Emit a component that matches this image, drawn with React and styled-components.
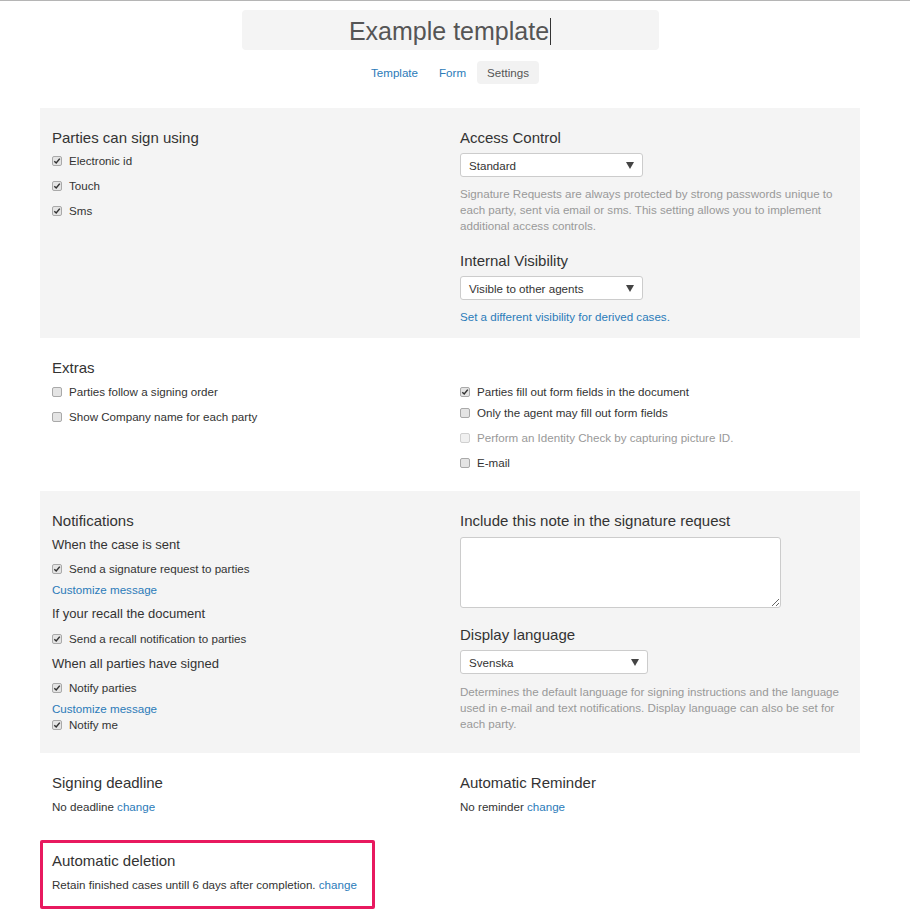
import React from 'react';
import styled, { createGlobalStyle } from 'styled-components';

const SMALL = '11.6px';

const GlobalStyle = createGlobalStyle`
  body {
    margin: 0;
    border-top: 1px solid #b5b5b5;
    font-family: "Liberation Sans", Arial, sans-serif;
    color: #333;
    background: #fff;
  }
`

const Page = styled.div`
  width: 820px;
  margin: 0 50px 0 40px;
  padding-bottom: 4px;
`
const TitleBox = styled.div`
  width: 417px;
  height: 40px;
  margin: 9px auto 0;
  padding-top: 2px;
  box-sizing: border-box;
  background: #f4f4f4;
  border-radius: 4px;
  display: flex;
  align-items: center;
  justify-content: center;
  font-size: 25px;
  color: #555;
`
const Caret = styled.span`
  display: inline-block;
  width: 1px;
  height: 27px;
  margin-left: 1px;
  background: #333;
`
const Tabs = styled.div`
  display: flex;
  justify-content: center;
  gap: 1px;
  margin-top: 11px;
`
const Tab = styled.a`
  height: 23px;
  line-height: 24px;
  padding: 0 10px;
  font-size: ${SMALL};
  border-radius: 4px;
  color: ${p => (p.$active ? '#555' : '#2b7bb9')};
  background: ${p => (p.$active ? '#f2f2f2' : 'transparent')};
`
const Panel = styled.section`
  display: grid;
  grid-template-columns: 388px 388px;
  column-gap: 20px;
  align-items: start;
  margin-top: ${p => p.$mt || 0}px;
  padding: ${p => p.$pt}px 12px ${p => p.$pb}px;
  background: ${p => (p.$gray ? '#f4f4f4' : 'transparent')};
`
const Col = styled.div`
  display: flex;
  flex-direction: column;
  align-items: flex-start;
`
const Heading = styled.h4`
  margin: ${p => p.$mt || 0}px 0 0;
  font-size: 15px;
  line-height: 20px;
  font-weight: normal;
  color: #333;
`
const SubHeading = styled.div`
  margin-top: ${p => p.$mt || 0}px;
  font-size: 13px;
  line-height: 18px;
`
const Row = styled.label`
  display: flex;
  align-items: center;
  gap: 7px;
  height: 21px;
  margin-top: ${p => p.$mt || 0}px;
  font-size: ${SMALL};
  color: ${p => (p.$disabled ? '#999' : '#333')};
`
const Box = styled.span`
  width: 10px;
  height: 10px;
  box-sizing: border-box;
  border: 1px solid ${p => (p.$disabled ? '#d0d0d0' : '#a9a9a9')};
  border-radius: 2px;
  background: ${p => (p.$disabled ? '#f0f0f0' : '#e4e4e4')};
  display: flex;
  align-items: center;
  justify-content: center;
`
const Link = styled.a`
  display: block;
  margin-top: ${p => p.$mt || 0}px;
  font-size: ${SMALL};
  line-height: 16px;
  color: #2b7bb9;
  cursor: pointer;
`
const InlineLink = styled.a`
  color: #2b7bb9;
  cursor: pointer;
`
const Help = styled.p`
  margin: ${p => p.$mt || 0}px 0 0;
  font-size: ${SMALL};
  line-height: 16px;
  color: #999;
`
const Text = styled.div`
  margin-top: ${p => p.$mt || 0}px;
  font-size: ${SMALL};
  line-height: 16px;
  white-space: nowrap;
`
const Select = styled.div`
  box-sizing: border-box;
  width: ${p => p.$w}px;
  height: 24px;
  margin-top: ${p => p.$mt || 0}px;
  padding: 0 8px;
  display: flex;
  align-items: center;
  justify-content: space-between;
  background: #fff;
  border: 1px solid #ccc;
  border-radius: 3px;
  font-size: ${SMALL};
  color: #333;
`
const Arrow = styled.span`
  width: 0;
  height: 0;
  border-left: 4px solid transparent;
  border-right: 4px solid transparent;
  border-top: 7px solid #444;
`
const Note = styled.textarea`
  display: block;
  box-sizing: border-box;
  width: 321px;
  height: 71px;
  margin-top: ${p => p.$mt || 0}px;
  border: 1px solid #ccc;
  border-radius: 3px;
  background: #fff;
  resize: both;
`
const Highlight = styled.div`
  box-sizing: border-box;
  width: 335px;
  margin-top: 25px;
  padding: 8px 9px 13px;
  border: 3px solid #e8195f;
  border-radius: 2px;
`

const Check = ({ checked, disabled, mt, children }) => (
  <Row $mt={mt} $disabled={disabled}>
    <Box $disabled={disabled}>
      {checked && (
        <svg width="8" height="8" viewBox="0 0 8 8">
          <path d="M1.3 4.2 L3.2 6 L6.8 1.6" fill="none" stroke="#333" strokeWidth="1.5" />
        </svg>
      )}
    </Box>
    {children}
  </Row>
)

export default function App() {
  return (
    <Page>
      <GlobalStyle />
      <TitleBox>Example template<Caret /></TitleBox>
      <Tabs>
        <Tab>Template</Tab>
        <Tab>Form</Tab>
        <Tab $active>Settings</Tab>
      </Tabs>

      <Panel $gray $mt={24} $pt={20} $pb={13}>
        <Col>
          <Heading>Parties can sign using</Heading>
          <Check checked mt={2}>Electronic id</Check>
          <Check checked mt={4}>Touch</Check>
          <Check checked mt={4}>Sms</Check>
        </Col>
        <Col>
          <Heading>Access Control</Heading>
          <Select $w={183} $mt={5}>Standard<Arrow /></Select>
          <Help $mt={9}>
            Signature Requests are always protected by strong passwords unique to each party, sent via email or sms. This setting allows you to implement additional access controls.
          </Help>
          <Heading $mt={17}>Internal Visibility</Heading>
          <Select $w={183} $mt={5}>Visible to other agents<Arrow /></Select>
          <Link $mt={9}>Set a different visibility for derived cases.</Link>
        </Col>
      </Panel>

      <Panel $pt={20} $pb={18}>
        <Col>
          <Heading>Extras</Heading>
          <Check mt={3}>Parties follow a signing order</Check>
          <Check mt={4}>Show Company name for each party</Check>
        </Col>
        <Col>
          <Check checked mt={23}>Parties fill out form fields in the document</Check>
          <Check>Only the agent may fill out form fields</Check>
          <Check disabled mt={4}>Perform an Identity Check by capturing picture ID.</Check>
          <Check mt={4}>E-mail</Check>
        </Col>
      </Panel>

      <Panel $gray $pt={20} $pb={18}>
        <Col>
          <Heading>Notifications</Heading>
          <SubHeading $mt={5}>When the case is sent</SubHeading>
          <Check checked mt={4}>Send a signature request to parties</Check>
          <Link $mt={3}>Customize message</Link>
          <SubHeading $mt={7}>If your recall the document</SubHeading>
          <Check checked mt={5}>Send a recall notification to parties</Check>
          <SubHeading $mt={6}>When all parties have signed</SubHeading>
          <Check checked mt={4}>Notify parties</Check>
          <Link $mt={3}>Customize message</Link>
          <Check checked mt={-3}>Notify me</Check>
        </Col>
        <Col>
          <Heading>Include this note in the signature request</Heading>
          <Note $mt={6} />
          <Heading $mt={17}>Display language</Heading>
          <Select $w={188} $mt={5}>Svenska<Arrow /></Select>
          <Help $mt={10}>
            Determines the default language for signing instructions and the language used in e-mail and text notifications. Display language can also be set for each party.
          </Help>
        </Col>
      </Panel>

      <Panel $pt={20} $pb={0}>
        <Col>
          <Heading>Signing deadline</Heading>
          <Text $mt={6}>No deadline <InlineLink>change</InlineLink></Text>
        </Col>
        <Col>
          <Heading>Automatic Reminder</Heading>
          <Text $mt={6}>No reminder <InlineLink>change</InlineLink></Text>
        </Col>
      </Panel>

      <Highlight>
        <Heading>Automatic deletion</Heading>
        <Text $mt={6}>Retain finished cases untill 6 days after completion. <InlineLink>change</InlineLink></Text>
      </Highlight>
    </Page>
  );
}
